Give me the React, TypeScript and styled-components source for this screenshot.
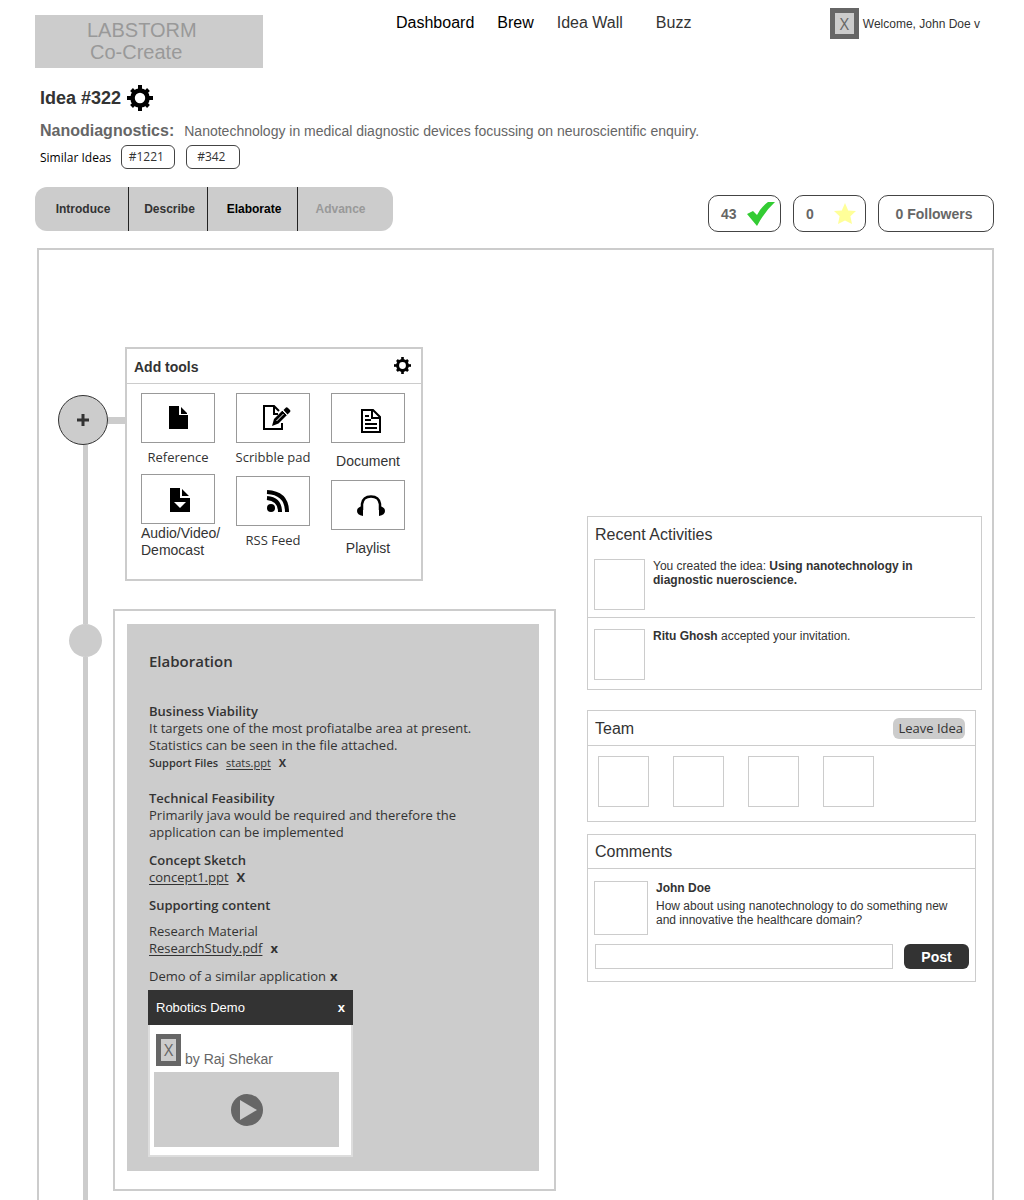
import React from "react";
import styled, { createGlobalStyle } from "styled-components";

const GlobalStyle = createGlobalStyle`
  *, *::before, *::after { box-sizing: border-box; }
  body {
    margin: 0;
    background: #fff;
    color: #333;
    font-family: "Liberation Sans", Arial, sans-serif;
    font-size: 12px;
  }
  h1, h2, h3, p, ul { margin: 0; padding: 0; font-size: inherit; font-weight: normal; }
  ul { list-style: none; }
  button, input { font: inherit; color: inherit; margin: 0; padding: 0; }
  button { background: none; border: 0; cursor: pointer; }
  a { color: inherit; text-decoration: none; }
  svg { display: block; }
`;

const humanist = `"Open Sans", "Noto Sans", sans-serif`;

const Page = styled.div`
  display: flex;
  flex-direction: column;
  min-height: 100vh;
  padding: 8px 30px 0 35px;
`;

/* ---------- header ---------- */

const Header = styled.header`
  display: flex;
  align-items: flex-start;
  padding-right: 14px;
`;

const Logo = styled.a`
  width: 228px;
  height: 53px;
  margin-top: 7px;
  padding: 4px 0 0 52px;
  background: #ccc;
  color: #999;
  font-size: 20px;
  line-height: 22px;
`;

const LogoSub = styled.span`
  display: block;
  padding-left: 3px;
`;

const Nav = styled.nav`
  display: flex;
  flex: 1;
  gap: 23px;
  padding: 5px 0 0 133px;
  font-size: 16px;
  line-height: 20px;
`;

const NavLink = styled.a<{ $strong?: boolean; $apart?: boolean }>`
  color: ${(p) => (p.$strong ? "#000" : "#333")};
  margin-left: ${(p) => (p.$apart ? "10px" : "0")};
`;

const User = styled.button`
  display: flex;
  align-items: center;
  gap: 4px;
  white-space: nowrap;
`;

const Avatar = styled.span<{ $w: number; $h: number }>`
  display: grid;
  place-items: center;
  width: ${(p) => p.$w}px;
  height: ${(p) => p.$h}px;
  background: #ccc;
  border: 5px solid #666;
  color: #666;
  font-family: ${humanist};
  font-size: 16px;
  line-height: 20px;
`;

/* ---------- idea summary ---------- */

const Summary = styled.section`
  padding: 17px 5px 0;
`;

const IdeaTitle = styled.h1`
  display: flex;
  align-items: center;
  gap: 6px;
  height: 26px;
  font-size: 18px;
  font-weight: bold;
`;

const Topic = styled.p`
  display: flex;
  align-items: baseline;
  gap: 10px;
  margin-top: 9px;
  color: #666;
  font-size: 14px;
  line-height: 22px;
`;

const TopicName = styled.strong`
  font-size: 16px;
`;

const Similar = styled.div`
  display: flex;
  align-items: center;
  gap: 10px;
  margin-top: 3px;
  color: #000;
  font-family: ${humanist};
  font-size: 12px;
`;

const Tags = styled.div`
  display: flex;
  gap: 11px;
`;

const Tag = styled.a`
  display: grid;
  place-items: center;
  width: 54px;
  height: 24px;
  padding: 0 4px 2px 0;
  border: 1px solid #444;
  border-radius: 6px;
  color: #333;
`;

/* ---------- stage tabs and counters ---------- */

const Toolbar = styled.div`
  display: flex;
  justify-content: space-between;
  align-items: flex-start;
  margin-top: 18px;
`;

const Tabs = styled.nav`
  display: grid;
  grid-template-columns: 94px 79px 90px 95px;
  height: 44px;
  overflow: hidden;
  background: #ccc;
  border-radius: 12px;
`;

const Tab = styled.button<{ $tone?: "active" | "muted" }>`
  padding-left: 3px;
  border-right: 1px solid #222;
  color: ${(p) =>
    p.$tone === "active" ? "#000" : p.$tone === "muted" ? "#999" : "#333"};
  font-weight: bold;

  &:last-child {
    border-right: 0;
    padding-right: 13px;
  }
`;

const Counters = styled.div`
  display: flex;
  gap: 12px;
  margin-top: 8px;
  font-size: 14px;
  font-weight: bold;
  color: #666;
`;

const Counter = styled.button<{ $wide?: boolean }>`
  display: flex;
  align-items: center;
  justify-content: ${(p) => (p.$wide ? "center" : "space-between")};
  width: ${(p) => (p.$wide ? 116 : 73)}px;
  height: 37px;
  padding: ${(p) => (p.$wide ? "0 4px 0 0" : "0 4px 0 12px")};
  border: 1px solid #444;
  border-radius: 10px;
  font-weight: bold;
`;

/* ---------- workspace ---------- */

const Workspace = styled.main`
  display: flex;
  flex: 1;
  gap: 31px;
  margin: 16px 0 0 2px;
  padding: 0 10px 0 19px;
  border: 2px solid #ccc;
  border-bottom: 0;
`;

const Timeline = styled.div`
  display: flex;
  flex-direction: column;
  width: 498px;
  padding-top: 97px;
`;

const Entry = styled.section<{ $grow?: boolean }>`
  display: flex;
  flex-grow: ${(p) => (p.$grow ? 1 : 0)};
`;

const Rail = styled.div<{ $top?: number }>`
  display: flex;
  flex-direction: column;
  align-items: center;
  width: 55px;
  padding-top: ${(p) => p.$top ?? 0}px;
`;

const Line = styled.span<{ $length?: number }>`
  flex: ${(p) => (p.$length ? `0 0 ${p.$length}px` : "1")};
  width: 5px;
  background: #ccc;
`;

const AddRow = styled.div`
  display: flex;
  align-items: center;
  align-self: flex-start;
  width: 67px;
`;

const AddButton = styled.button`
  display: grid;
  place-items: center;
  width: 50px;
  height: 50px;
  background: #ccc;
  border: 1px solid #333;
  border-radius: 50%;
`;

const Connector = styled.span`
  flex: 1;
  height: 7px;
  background: #ccc;
`;

const Dot = styled.span`
  width: 33px;
  height: 33px;
  background: #ccc;
  border-radius: 50%;
`;

const ToolsPanel = styled.div`
  width: 298px;
  height: 234px;
  margin: 0 0 28px 12px;
  border: 2px solid #ccc;
`;

const ToolsHeader = styled.div`
  display: flex;
  justify-content: space-between;
  align-items: center;
  height: 35px;
  padding: 0 10px 2px 7px;
  border-bottom: 1px solid #ccc;
  font-size: 14px;
`;

const ToolsTitle = styled.h2`
  padding-top: 4px;
  font-weight: bold;
`;

const ToolColumns = styled.div`
  display: flex;
  gap: 21px;
  padding: 9px 14px 0;
`;

const ToolColumn = styled.div<{ $gap: number }>`
  display: flex;
  flex-direction: column;
  gap: ${(p) => p.$gap}px;
  width: 74px;
`;

const Tool = styled.button<{ $gap: number; $left?: boolean; $humanist?: boolean }>`
  display: flex;
  flex-direction: column;
  align-items: ${(p) => (p.$left ? "flex-start" : "center")};
  gap: ${(p) => p.$gap}px;
  font-family: ${(p) => (p.$humanist ? humanist : "inherit")};
  font-size: ${(p) => (p.$humanist ? 13 : 14)}px;
  line-height: 17px;
  text-align: left;
  white-space: nowrap;
`;

const ToolTile = styled.span`
  display: grid;
  place-items: center;
  width: 74px;
  height: 50px;
  border: 1px solid #999;
`;

/* ---------- elaboration ---------- */

const Elaboration = styled.div`
  flex: 1;
  margin-bottom: 9px;
  padding: 13px 15px 18px 12px;
  border: 2px solid #ccc;
`;

const Sheet = styled.article`
  padding: 27px 21px 14px;
  background: #ccc;
  font-family: ${humanist};
  font-size: 13px;
  line-height: 17px;
`;

const SheetText = styled.div`
  padding-left: 1px;
`;

const SheetTitle = styled.h2`
  margin-bottom: 31px;
  font-size: 15px;
  font-weight: 600;
  line-height: 20px;
`;

const Block = styled.section<{ $after: number }>`
  margin-bottom: ${(p) => p.$after}px;
`;

const BlockTitle = styled.h3<{ $plain?: boolean }>`
  font-weight: ${(p) => (p.$plain ? 400 : 600)};
  line-height: 18px;
`;

const Copy = styled.p`
  max-width: 330px;
`;

const FileRow = styled.div<{ $small?: boolean }>`
  display: flex;
  gap: 8px;
  font-size: ${(p) => (p.$small ? 11 : 13)}px;
`;

const FileLabel = styled.span`
  font-weight: 600;
`;

const FileLink = styled.a`
  text-decoration: underline;
  text-underline-offset: 2px;
`;

const Remove = styled.button`
  font-weight: bold;
`;

const DemoRow = styled.div`
  display: flex;
  gap: 4px;
  margin-bottom: 5px;
`;

const Media = styled.div`
  width: 205px;
  background: #fff;
  font-family: "Liberation Sans", Arial, sans-serif;
`;

const MediaHeader = styled.div`
  display: flex;
  justify-content: space-between;
  align-items: center;
  height: 35px;
  padding: 0 8px;
  background: #333;
  color: #fff;
  font-size: 13px;
`;

const MediaBody = styled.div`
  padding: 9px 12px 8px 4px;
  border: 2px solid #ddd;
  border-top: 0;
`;

const Author = styled.div`
  display: flex;
  align-items: flex-end;
  gap: 4px;
  margin: 0 0 6px 2px;
  color: #666;
  font-size: 14px;
  line-height: 14px;
`;

const Video = styled.button`
  display: grid;
  place-items: center;
  width: 100%;
  height: 75px;
  background: #ccc;
`;

/* ---------- side panels ---------- */

const Aside = styled.aside`
  flex: 1;
  min-width: 0;
  padding-top: 266px;
`;

const Panel = styled.section<{ $inset?: boolean; $after?: number }>`
  margin: 0 ${(p) => (p.$inset ? 6 : 0)}px ${(p) => p.$after ?? 0}px 0;
  border: 1px solid #ccc;
`;

const PanelHeader = styled.div<{ $line?: boolean; $height: number }>`
  display: flex;
  align-items: center;
  justify-content: space-between;
  height: ${(p) => p.$height}px;
  padding: 0 10px 0 7px;
  border-bottom: ${(p) => (p.$line ? "1px solid #ccc" : "0")};
`;

const PanelTitle = styled.h2`
  padding-top: 1px;
  font-size: 16px;
  line-height: 20px;
`;

const Thumb = styled.span<{ $size?: number }>`
  flex: none;
  width: ${(p) => p.$size ?? 51}px;
  height: ${(p) => p.$size ?? 51}px;
  border: 1px solid #ccc;
`;

const Activity = styled.li`
  display: flex;
  gap: 8px;
  margin-right: 6px;
  padding: 11px 36px 9px 6px;
  line-height: 14px;

  &:first-child {
    padding: 8px 36px 7px 6px;
    border-bottom: 1px solid #ccc;
  }
`;

const Members = styled.div`
  display: flex;
  gap: 24px;
  padding: 10px 10px 14px;
`;

const LeaveButton = styled.button`
  height: 21px;
  padding: 0 2px 0 5px;
  background: #ccc;
  border-radius: 6px;
  font-family: ${humanist};
  font-size: 13px;
  line-height: 19px;
  white-space: nowrap;
`;

const Comment = styled.div`
  display: flex;
  gap: 8px;
  padding: 12px 6px 9px;
  line-height: 14px;
`;

const CommentAuthor = styled.p`
  margin-bottom: 4px;
  font-weight: bold;
`;

const CommentForm = styled.form`
  display: flex;
  gap: 11px;
  padding: 0 6px 12px 7px;
`;

const CommentInput = styled.input`
  flex: 1;
  min-width: 0;
  height: 25px;
  padding: 0 6px;
  border: 1px solid #ccc;
`;

const PostButton = styled.button`
  width: 65px;
  height: 25px;
  background: #333;
  border-radius: 6px;
  color: #fff;
  font-size: 14px;
  font-weight: bold;
`;

/* ---------- icons ---------- */

const Gear = ({ size }: { size: number }) => (
  <svg width={size} height={size} viewBox="0 0 26 26" aria-hidden="true">
    <circle cx="13" cy="13" r="7.5" fill="none" stroke="#000" strokeWidth="4.600" />
    {[0, 45, 90, 135, 180, 225, 270, 315].map((a) => (
      <rect key={a} x="11" y={a % 90 ? 1 : 0} width="4" height="5" transform={`rotate(${a} 13 13)`} />
    ))}
  </svg>
);

const Check = () => (
  <svg width="30" height="26" viewBox="0 0 30 26" aria-hidden="true">
    <path d="M1 13L7 10L11 14Q16 5 22 1H29Q19 10 11 25Z" fill="#3c3" />
  </svg>
);

const Star = () => (
  <svg width="30" height="24" viewBox="0 0 30 24" aria-hidden="true">
    <path d="M14 1L17.2 8.5L25 9L19.4 14.2L21 22L14 18.5L7 22L8.6 14.2L3 9L10.8 8.5Z" fill="#ff9" />
  </svg>
);

const Plus = () => (
  <svg width="12" height="12" viewBox="0 0 12 12" aria-hidden="true">
    <path d="M6 0V12M0 6H12" stroke="#333" strokeWidth="3" />
  </svg>
);

const FileIcon = () => (
  <svg width="19" height="24" viewBox="0 0 19 24" aria-hidden="true">
    <path d="M0 0H10V9H19V23H0ZM12 1L18 7V8H12Z" />
  </svg>
);

const ScribbleIcon = () => (
  <svg width="36" height="26" viewBox="-8 0 36 26" aria-hidden="true">
    <path d="M19 18V24H1V1H11L16 6" fill="none" stroke="#000" strokeWidth="2" />
    <path d="M11 1V9H15" fill="none" stroke="#000" strokeWidth="2" />
    <path d="M9 21L11 14L19.5 5.5L24 10L15.5 18.500Z" />
    <path d="M13.5 16L20.5 9M18.5 4.500L24.500 10.500" stroke="#fff" strokeWidth="1" />
    <path d="M20.5 5L23 2.5Q24 2 25 3L27 5Q28 6 27 7L24.5 9.500Z" />
  </svg>
);

const DocumentIcon = () => (
  <svg width="26" height="30" viewBox="-6 -6 26 30" aria-hidden="true">
    <path d="M1 1H12L19 8V23H1ZM11 1V9H19" fill="none" stroke="#000" strokeWidth="2" />
    <path d="M4 7H8M4 11H10M4 15H16M4 19H16" fill="none" stroke="#000" strokeWidth="2" />
  </svg>
);

const DownloadFileIcon = () => (
  <svg width="24" height="26" viewBox="-4 -2 24 26" aria-hidden="true">
    <path d="M0 0H10V10H20V24H0ZM12 1L19 8H12Z" />
    <path d="M4 14H16L10 20Z" fill="#fff" />
  </svg>
);

const RssIcon = () => (
  <svg width="32" height="22" viewBox="-10 0 32 22" aria-hidden="true">
    <circle cx="4" cy="18" r="4" />
    <path d="M0 8Q13 9 13 22M0 2Q20 3 20 22" fill="none" stroke="#000" strokeWidth="4" />
  </svg>
);

const HeadphonesIcon = () => (
  <svg width="34" height="21" viewBox="-6 0 34 21" aria-hidden="true">
    <path d="M5 15V9Q6 1.500 14 1.500Q22 1.500 23 9V15" fill="none" stroke="#000" strokeWidth="2.500" />
    <path d="M6 11V21Q0 20 0 16Q0 12 6 11ZM22 11V21Q28 20 28 16Q28 12 22 11Z" />
  </svg>
);

const PlayIcon = () => (
  <svg width="32" height="32" viewBox="0 0 32 32" aria-hidden="true">
    <circle cx="16" cy="16" r="16" fill="#666" />
    <path d="M9 6V26L26 16Z" fill="#ccc" />
  </svg>
);

/* ---------- data ---------- */

type ToolItem = {
  label: React.ReactNode;
  icon: React.ReactNode;
  gap: number;
  left?: boolean;
  humanist?: boolean;
};

const toolColumns: { gap: number; tools: ToolItem[] }[] = [
  {
    gap: 8,
    tools: [
      { label: "Reference", icon: <FileIcon />, gap: 6, humanist: true },
      { label: <>Audio/Video/<br />Democast</>, icon: <DownloadFileIcon />, gap: 1, left: true },
    ],
  },
  {
    gap: 10,
    tools: [
      { label: "Scribble pad", icon: <ScribbleIcon />, gap: 6, humanist: true },
      { label: "RSS Feed", icon: <RssIcon />, gap: 6, humanist: true },
    ],
  },
  {
    gap: 10,
    tools: [
      { label: "Document", icon: <DocumentIcon />, gap: 10 },
      { label: "Playlist", icon: <HeadphonesIcon />, gap: 10 },
    ],
  },
];

export default function App() {
  return (
    <Page>
      <GlobalStyle />
      <Header>
        <Logo href="#">
          LABSTORM
          <LogoSub>Co-Create</LogoSub>
        </Logo>
        <Nav>
          <NavLink href="#" $strong>Dashboard</NavLink>
          <NavLink href="#" $strong>Brew</NavLink>
          <NavLink href="#">Idea Wall</NavLink>
          <NavLink href="#" $apart>Buzz</NavLink>
        </Nav>
        <User type="button">
          <Avatar $w={29} $h={31}>X</Avatar>
          Welcome, John Doe v
        </User>
      </Header>

      <Summary>
        <IdeaTitle>
          Idea #322
          <button type="button" aria-label="Idea settings"><Gear size={26} /></button>
        </IdeaTitle>
        <Topic>
          <TopicName>Nanodiagnostics:</TopicName>
          Nanotechnology in medical diagnostic devices focussing on neuroscientific enquiry.
        </Topic>
        <Similar>
          Similar Ideas
          <Tags>
            <Tag href="#">#1221</Tag>
            <Tag href="#">#342</Tag>
          </Tags>
        </Similar>
      </Summary>

      <Toolbar>
        <Tabs>
          <Tab type="button">Introduce</Tab>
          <Tab type="button">Describe</Tab>
          <Tab type="button" $tone="active">Elaborate</Tab>
          <Tab type="button" $tone="muted">Advance</Tab>
        </Tabs>
        <Counters>
          <Counter type="button">43 <Check /></Counter>
          <Counter type="button">0 <Star /></Counter>
          <Counter type="button" $wide>0 Followers</Counter>
        </Counters>
      </Toolbar>

      <Workspace>
        <Timeline>
          <Entry>
            <Rail $top={48}>
              <AddRow>
                <AddButton type="button" aria-label="Add"><Plus /></AddButton>
                <Connector />
              </AddRow>
              <Line />
            </Rail>
            <ToolsPanel>
              <ToolsHeader>
                <ToolsTitle>Add tools</ToolsTitle>
                <button type="button" aria-label="Tool settings"><Gear size={17} /></button>
              </ToolsHeader>
              <ToolColumns>
                {toolColumns.map((column, i) => (
                  <ToolColumn key={i} $gap={column.gap}>
                    {column.tools.map((tool, j) => (
                      <Tool
                        key={j}
                        type="button"
                        $gap={tool.gap}
                        $left={tool.left}
                        $humanist={tool.humanist}
                      >
                        <ToolTile>{tool.icon}</ToolTile>
                        <span>{tool.label}</span>
                      </Tool>
                    ))}
                  </ToolColumn>
                ))}
              </ToolColumns>
            </ToolsPanel>
          </Entry>

          <Entry $grow>
            <Rail>
              <Line $length={15} />
              <Dot />
              <Line />
            </Rail>
            <Elaboration>
              <Sheet>
                <SheetText>
                  <SheetTitle>Elaboration</SheetTitle>
                  <Block $after={18}>
                    <BlockTitle>Business Viability</BlockTitle>
                    <Copy>
                      It targets one of the most profiatalbe area at present.
                      <br />
                      Statistics can be seen in the file attached.
                    </Copy>
                    <FileRow $small>
                      <FileLabel>Support Files</FileLabel>
                      <FileLink href="#">stats.ppt</FileLink>
                      <Remove type="button">X</Remove>
                    </FileRow>
                  </Block>
                  <Block $after={10}>
                    <BlockTitle>Technical Feasibility</BlockTitle>
                    <Copy>
                      Primarily java would be required and therefore the
                      <br />
                      application can be implemented
                    </Copy>
                  </Block>
                  <Block $after={10}>
                    <BlockTitle>Concept Sketch</BlockTitle>
                    <FileRow>
                      <FileLink href="#">concept1.ppt</FileLink>
                      <Remove type="button">X</Remove>
                    </FileRow>
                  </Block>
                  <Block $after={8}>
                    <BlockTitle>Supporting content</BlockTitle>
                  </Block>
                  <Block $after={11}>
                    <BlockTitle $plain>Research Material</BlockTitle>
                    <FileRow>
                      <FileLink href="#">ResearchStudy.pdf</FileLink>
                      <Remove type="button">x</Remove>
                    </FileRow>
                  </Block>
                  <DemoRow>
                    Demo of a similar application
                    <Remove type="button">x</Remove>
                  </DemoRow>
                </SheetText>
                <Media>
                  <MediaHeader>
                    Robotics Demo
                    <Remove type="button">x</Remove>
                  </MediaHeader>
                  <MediaBody>
                    <Author>
                      <Avatar $w={25} $h={32}>X</Avatar>
                      by Raj Shekar
                    </Author>
                    <Video type="button" aria-label="Play"><PlayIcon /></Video>
                  </MediaBody>
                </Media>
              </Sheet>
            </Elaboration>
          </Entry>
        </Timeline>

        <Aside>
          <Panel $after={20}>
            <PanelHeader $height={34}>
              <PanelTitle>Recent Activities</PanelTitle>
            </PanelHeader>
            <ul>
              <Activity>
                <Thumb />
                <p>
                  You created the idea: <strong>Using nanotechnology in</strong>{" "}
                  <strong>diagnostic nueroscience.</strong>
                </p>
              </Activity>
              <Activity>
                <Thumb />
                <p><strong>Ritu Ghosh</strong> accepted your invitation.</p>
              </Activity>
            </ul>
          </Panel>
          <Panel $inset $after={12}>
            <PanelHeader $line $height={35}>
              <PanelTitle>Team</PanelTitle>
              <LeaveButton type="button">Leave Idea</LeaveButton>
            </PanelHeader>
            <Members>
              <Thumb />
              <Thumb />
              <Thumb />
              <Thumb />
            </Members>
          </Panel>
          <Panel $inset>
            <PanelHeader $line $height={34}>
              <PanelTitle>Comments</PanelTitle>
            </PanelHeader>
            <Comment>
              <Thumb $size={54} />
              <div>
                <CommentAuthor>John Doe</CommentAuthor>
                <p>How about using nanotechnology to do something new and innovative the healthcare domain?</p>
              </div>
            </Comment>
            <CommentForm>
              <CommentInput aria-label="Write a comment" />
              <PostButton type="button">Post</PostButton>
            </CommentForm>
          </Panel>
        </Aside>
      </Workspace>
    </Page>
  );
}
